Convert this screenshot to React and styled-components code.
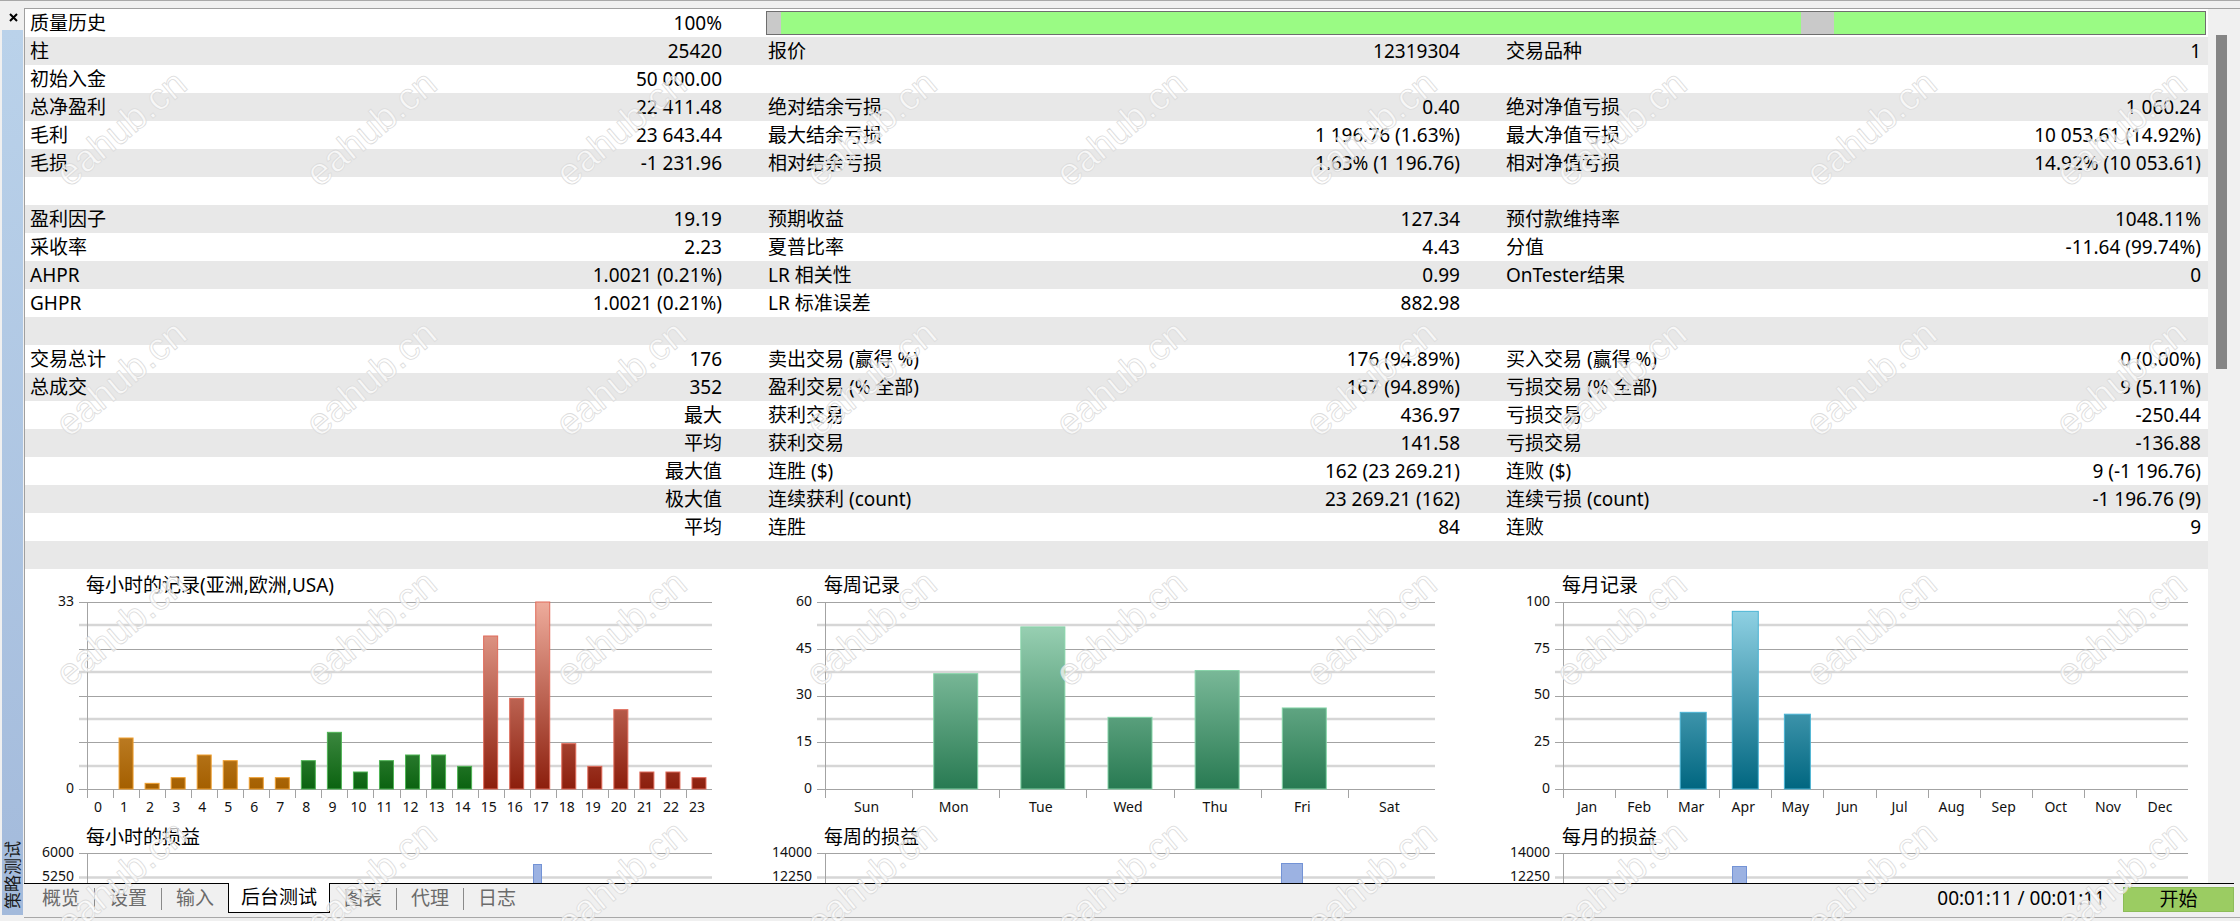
import React from "react";
import styled, { createGlobalStyle } from "styled-components";

const GlobalStyle = createGlobalStyle`
  html, body { margin: 0; padding: 0; }
  body {
    background: #f0f0f0;
    font-family: "Noto Sans", "Noto Sans CJK SC", sans-serif;
    color: #000;
  }
`;

const rows = [
  { cells: [["质量历史", "100%"]], progress: true },
  { cells: [["柱", "25420"], ["报价", "12319304"], ["交易品种", "1"]] },
  { cells: [["初始入金", "50 000.00"]] },
  { cells: [["总净盈利", "22 411.48"], ["绝对结余亏损", "0.40"], ["绝对净值亏损", "1 060.24"]] },
  { cells: [["毛利", "23 643.44"], ["最大结余亏损", "1 196.76 (1.63%)"], ["最大净值亏损", "10 053.61 (14.92%)"]] },
  { cells: [["毛损", "-1 231.96"], ["相对结余亏损", "1.63% (1 196.76)"], ["相对净值亏损", "14.92% (10 053.61)"]] },
  { cells: [] },
  { cells: [["盈利因子", "19.19"], ["预期收益", "127.34"], ["预付款维持率", "1048.11%"]] },
  { cells: [["采收率", "2.23"], ["夏普比率", "4.43"], ["分值", "-11.64 (99.74%)"]] },
  { cells: [["AHPR", "1.0021 (0.21%)"], ["LR 相关性", "0.99"], ["OnTester结果", "0"]] },
  { cells: [["GHPR", "1.0021 (0.21%)"], ["LR 标准误差", "882.98"]] },
  { cells: [] },
  { cells: [["交易总计", "176"], ["卖出交易 (赢得 %)", "176 (94.89%)"], ["买入交易 (赢得 %)", "0 (0.00%)"]] },
  { cells: [["总成交", "352"], ["盈利交易 (% 全部)", "167 (94.89%)"], ["亏损交易 (% 全部)", "9 (5.11%)"]] },
  { cells: [["", "最大"], ["获利交易", "436.97"], ["亏损交易", "-250.44"]] },
  { cells: [["", "平均"], ["获利交易", "141.58"], ["亏损交易", "-136.88"]] },
  { cells: [["", "最大值"], ["连胜 ($)", "162 (23 269.21)"], ["连败 ($)", "9 (-1 196.76)"]] },
  { cells: [["", "极大值"], ["连续获利 (count)", "23 269.21 (162)"], ["连续亏损 (count)", "-1 196.76 (9)"]] },
  { cells: [["", "平均"], ["连胜", "84"], ["连败", "9"]] },
  { cells: [] },
];

const hours = [0, 9, 1, 2, 6, 5, 2, 2, 5, 10, 3, 5, 6, 6, 4, 27, 16, 33, 8, 4, 14, 3, 3, 2];
const hourColor = (i) => (i < 8 ? "orange" : i < 15 ? "green" : "red");

const palettes = {
  orange: { bottom: "#a45f00", top: "#f5c27a", stroke: "#f0a030" },
  green: { bottom: "#0b6310", top: "#a8d8a8", stroke: "#4fb455" },
  red: { bottom: "#8c1e0c", top: "#eeac9c", stroke: "#e06b5a" },
  mint: { bottom: "#287a52", top: "#a8dcc0", stroke: "#86d4a8" },
  teal: { bottom: "#006680", top: "#96d6e8", stroke: "#4ab4d4" },
};

const tabs = ["概览", "设置", "输入", "后台测试", "图表", "代理", "日志"];

export default function App() {
  return (
    <>
      <GlobalStyle />
      <Page>
        <Sidebar>
          <CloseBox>
            <svg width="9" height="9" viewBox="0 0 9 9">
              <path d="M1 1L8 8M8 1L1 8" stroke="#000" strokeWidth="2" />
            </svg>
          </CloseBox>
          <SideStrip>
            <SideLabel>策略测试</SideLabel>
          </SideStrip>
        </Sidebar>
        <Main>
          <Panel>
            <Scroller>
              {rows.map((row, i) => (
                <Row key={i} $alt={i % 2 === 1}>
                  {row.cells.map(([label, value], j) => (
                    <Stat key={j}>
                      <span>{label}</span>
                      <span>{value}</span>
                    </Stat>
                  ))}
                  {row.progress && (
                    <Progress>
                      <Seg $gray $w="14px" />
                      <Seg $grow={1021} />
                      <Seg $gray $w="33px" />
                      <Seg $grow={371} />
                    </Progress>
                  )}
                </Row>
              ))}
              <ChartsRow>
                <ChartPanel $w={715}>
                  <RecordChart
                    id="h"
                    title="每小时的记录(亚洲,欧洲,USA)"
                    axis={62}
                    labelRight={49}
                    plotW={625}
                    max={33}
                    yLabels={["33", "", "", "", "0"]}
                    xLabels={hours.map((_, i) => String(i))}
                    values={hours}
                    barW={14}
                    colorOf={hourColor}
                    used={["orange", "green", "red"]}
                  />
                  <LossChart
                    title="每小时的损益"
                    axis={62}
                    labelRight={49}
                    plotW={625}
                    yLabels={["6000", "5250", "4500"]}
                    bar={{ x: 508, w: 8, top: 11 }}
                  />
                </ChartPanel>
                <ChartPanel $w={740}>
                  <RecordChart
                    id="w"
                    title="每周记录"
                    axis={85}
                    labelRight={72}
                    plotW={610}
                    max={60}
                    yLabels={["60", "45", "30", "15", "0"]}
                    xLabels={["Sun", "Mon", "Tue", "Wed", "Thu", "Fri", "Sat"]}
                    values={[0, 37, 52, 23, 38, 26, 0]}
                    barW={44}
                    colorOf={() => "mint"}
                    used={["mint"]}
                  />
                  <LossChart
                    title="每周的损益"
                    axis={85}
                    labelRight={72}
                    plotW={610}
                    yLabels={["14000", "12250", "10500"]}
                    bar={{ x: 541, w: 21, top: 10 }}
                  />
                </ChartPanel>
                <ChartPanel $w={728}>
                  <RecordChart
                    id="m"
                    title="每月记录"
                    axis={83}
                    labelRight={70}
                    plotW={625}
                    max={100}
                    yLabels={["100", "75", "50", "25", "0"]}
                    xLabels={["Jan", "Feb", "Mar", "Apr", "May", "Jun", "Jul", "Aug", "Sep", "Oct", "Nov", "Dec"]}
                    values={[0, 0, 41, 95, 40, 0, 0, 0, 0, 0, 0, 0]}
                    barW={26}
                    colorOf={() => "teal"}
                    used={["teal"]}
                  />
                  <LossChart
                    title="每月的损益"
                    axis={83}
                    labelRight={70}
                    plotW={625}
                    yLabels={["14000", "12250", "10500"]}
                    bar={{ x: 252, w: 14, top: 13 }}
                  />
                </ChartPanel>
              </ChartsRow>
            </Scroller>
            <Scrollbar>
              <Thumb />
            </Scrollbar>
          </Panel>
          <TabBar>
            {tabs.map((t, i) => {
              const active = t === "后台测试";
              const nextActive = tabs[i + 1] === "后台测试";
              return (
                <React.Fragment key={t}>
                  <Tab $active={active}>{t}</Tab>
                  {!active && !nextActive && i < tabs.length - 1 && <TabSep />}
                </React.Fragment>
              );
            })}
            <Spacer />
            <Timer>00:01:11 / 00:01:11</Timer>
            <StartButton>开始</StartButton>
          </TabBar>
          <BottomRule />
        </Main>
        <Watermarks>
          {Array.from({ length: 36 }, (_, i) => (
            <MarkCell key={i}>
              <Mark>eahub.cn</Mark>
            </MarkCell>
          ))}
        </Watermarks>
      </Page>
    </>
  );
}

function RecordChart({ id, title, axis, labelRight, plotW, max, yLabels, xLabels, values, barW, colorOf, used }) {
  const top = 1;
  const base = 188;
  const H = base - top;
  const colW = plotW / xLabels.length;
  return (
    <>
      <ChartTitle $indent={axis - 1}>{title}</ChartTitle>
      <Plot width="100%" height="220">
        <defs>
          {used.map((k) => (
            <linearGradient key={k} id={`${id}-${k}`} gradientUnits="userSpaceOnUse" x1="0" y1={base} x2="0" y2={top}>
              <stop offset="0" stopColor={palettes[k].bottom} />
              <stop offset="1" stopColor={palettes[k].top} />
            </linearGradient>
          ))}
        </defs>
        {Array.from({ length: 9 }, (_, i) => {
          const major = i % 2 === 0;
          const y = Math.round(top + (i * H) / 8) + (major ? 0.5 : 0);
          return (
            <line
              key={i}
              x1={axis - 8}
              x2={axis + plotW}
              y1={y}
              y2={y}
              stroke={major ? "#a3a3a3" : "#d6d6d6"}
              strokeWidth={major ? 1 : 2.5}
            />
          );
        })}
        {yLabels.map((l, j) =>
          l ? (
            <text key={j} x={labelRight} y={top + (j * H) / 4} textAnchor="end" dominantBaseline="middle">
              {l}
            </text>
          ) : null
        )}
        <line x1={axis + 0.5} x2={axis + 0.5} y1={top} y2={base + 9} stroke="#a3a3a3" />
        {xLabels.slice(1).map((_, k) => {
          const x = Math.round(axis + (k + 1) * colW) + 0.5;
          return <line key={k} x1={x} x2={x} y1={base} y2={base + 9} stroke="#a3a3a3" />;
        })}
        {values.map((v, i) => {
          if (!v) return null;
          const h = (v / max) * H;
          const c = colorOf(i);
          return (
            <rect
              key={i}
              x={axis + i * colW + (colW - barW) / 2}
              y={base - h}
              width={barW}
              height={h}
              fill={`url(#${id}-${c})`}
              stroke={palettes[c].stroke}
              strokeWidth="1"
            />
          );
        })}
        {xLabels.map((l, i) => (
          <text key={l} x={axis + (i + 0.5) * colW - 2} y={base + 19} textAnchor="middle" dominantBaseline="middle">
            {l}
          </text>
        ))}
      </Plot>
    </>
  );
}

function LossChart({ title, axis, labelRight, plotW, yLabels, bar }) {
  return (
    <>
      <ChartTitle $indent={axis - 1}>{title}</ChartTitle>
      <Plot width="100%" height="60">
        {yLabels.map((l, i) => {
          const major = i % 2 === 0;
          const y = i * 24 + 0.5;
          return (
            <React.Fragment key={l}>
              <line
                x1={axis - 8}
                x2={axis + plotW}
                y1={y}
                y2={y}
                stroke={major ? "#a3a3a3" : "#d6d6d6"}
                strokeWidth={major ? 1 : 2.5}
              />
              <text x={labelRight} y={y} textAnchor="end" dominantBaseline="middle">
                {l}
              </text>
            </React.Fragment>
          );
        })}
        <line x1={axis + 0.5} x2={axis + 0.5} y1={0} y2={60} stroke="#a3a3a3" />
        <rect x={bar.x + 0.5} y={bar.top + 0.5} width={bar.w} height={60} fill="#9cb2e2" stroke="#7393d6" />
      </Plot>
    </>
  );
}

const Page = styled.div`
  position: relative;
  display: flex;
  width: 2240px;
  height: 921px;
  box-sizing: border-box;
  border-top: 1px solid #a8a8a8;
  background: #f0f0f0;
  overflow: hidden;
`;

const Sidebar = styled.div`
  display: flex;
  flex-direction: column;
  width: 24px;
  flex-shrink: 0;
`;

const CloseBox = styled.div`
  height: 29px;
  display: flex;
  align-items: center;
  justify-content: center;
  padding: 4px 0 0 3px;
  box-sizing: border-box;
`;

const SideStrip = styled.div`
  flex: 1;
  margin: 0 1px 6px 2px;
  background: linear-gradient(to bottom, #bad2ea, #a3badb);
  display: flex;
  flex-direction: column;
  justify-content: flex-end;
  align-items: center;
  padding-bottom: 6px;
`;

const SideLabel = styled.div`
  writing-mode: vertical-rl;
  text-orientation: sideways;
  transform: rotate(180deg);
  font-size: 17px;
  line-height: 21px;
  color: #1a1a1a;
`;

const Main = styled.div`
  flex: 1;
  display: flex;
  flex-direction: column;
  padding-top: 7px;
  min-width: 0;
`;

const Panel = styled.div`
  flex: 1;
  display: flex;
  border-top: 1px solid #a0a0a0;
  border-left: 1px solid #a0a0a0;
  min-height: 0;
`;

const Scroller = styled.div`
  flex: 1;
  overflow: hidden;
  background: #fff;
  font-size: 19px;
`;

const Row = styled.div`
  display: grid;
  grid-template-columns: 692px 692px 695px;
  column-gap: 46px;
  padding: 0 7px 0 5px;
  height: 28px;
  align-items: center;
  line-height: 28px;
  background: ${(p) => (p.$alt ? "#e8e8e8" : "#fff")};
`;

const Stat = styled.div`
  display: flex;
  justify-content: space-between;
  white-space: nowrap;
`;

const Progress = styled.div`
  grid-column: 2 / 4;
  display: flex;
  height: 22px;
  margin: 0 -5px 0 -2px;
  border: 1px solid #6e6e6e;
  background: #9afb84;
`;

const Seg = styled.div`
  flex: ${(p) => (p.$grow ? `${p.$grow} 1 0` : `0 0 ${p.$w}`)};
  background: ${(p) => (p.$gray ? "#c9c9c9" : "#9afb84")};
`;

const ChartsRow = styled.div`
  display: flex;
  background: #fff;
`;

const ChartPanel = styled.div`
  width: ${(p) => p.$w}px;
  flex-shrink: 0;
`;

const ChartTitle = styled.div`
  height: 32px;
  line-height: 32px;
  padding-left: ${(p) => p.$indent}px;
  font-size: 19px;
  white-space: nowrap;
`;

const Plot = styled.svg`
  display: block;
  overflow: visible;
  text {
    font-family: "Noto Sans", "Liberation Sans", sans-serif;
    font-size: 14px;
    fill: #111;
  }
`;

const Scrollbar = styled.div`
  width: 32px;
  flex-shrink: 0;
  background: #f0f0f0;
  padding: 26px 13px 0 8px;
  box-sizing: border-box;
`;

const Thumb = styled.div`
  height: 334px;
  background: #858585;
`;

const TabBar = styled.div`
  display: flex;
  align-items: flex-start;
  height: 32px;
  box-sizing: border-box;
  border-top: 1px solid #000;
  margin-right: 6px;
  padding-left: 4px;
  font-size: 19px;
`;

const Tab = styled.div`
  height: ${(p) => (p.$active ? "30px" : "29px")};
  line-height: 29px;
  padding: 0 ${(p) => (p.$active ? "12px" : "14px")};
  margin-top: ${(p) => (p.$active ? "-1px" : "0")};
  box-sizing: border-box;
  color: ${(p) => (p.$active ? "#000" : "#6b6b6b")};
  background: ${(p) => (p.$active ? "#fff" : "transparent")};
  border: ${(p) => (p.$active ? "1px solid #000" : "none")};
  border-top: none;
  white-space: nowrap;
`;

const TabSep = styled.div`
  width: 1px;
  height: 22px;
  margin-top: 4px;
  background: #8a8a8a;
`;

const Spacer = styled.div`
  flex: 1;
`;

const Timer = styled.div`
  line-height: 29px;
  margin-right: 18px;
  white-space: nowrap;
`;

const StartButton = styled.div`
  width: 111px;
  height: 25px;
  margin-top: 3px;
  box-sizing: border-box;
  border: 1px solid #8cbc58;
  background: #9bcc62;
  text-align: center;
  line-height: 23px;
`;

const BottomRule = styled.div`
  height: 1px;
  margin: 2px 0 3px;
  background: #a8a8a8;
`;

const Watermarks = styled.div`
  position: absolute;
  left: -4px;
  top: 2px;
  display: grid;
  grid-template-columns: repeat(9, 250px);
  grid-auto-rows: 250px;
  pointer-events: none;
`;

const MarkCell = styled.div`
  display: flex;
  align-items: center;
  justify-content: center;
`;

const Mark = styled.span`
  transform: rotate(-40deg);
  font-family: "Liberation Sans", sans-serif;
  font-size: 38px;
  color: rgba(255, 255, 255, 0.7);
  -webkit-text-stroke: 0.8px #dcdcdc;
  white-space: nowrap;
`;
